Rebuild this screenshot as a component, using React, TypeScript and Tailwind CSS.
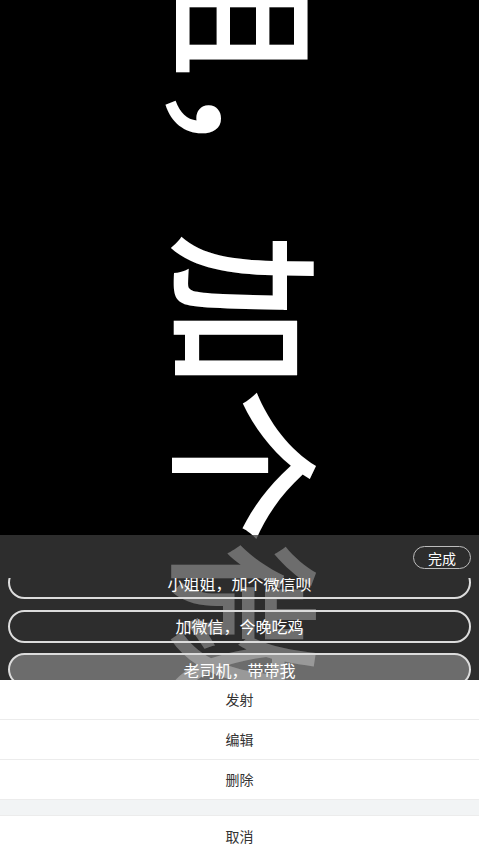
import React from "react";

const phrases = [
  { text: "小姐姐，加个微信呗", active: false },
  { text: "加微信，今晚吃鸡", active: false },
  { text: "老司机，带带我", active: true },
];

const actions = ["发射", "编辑", "删除"];

const cjk = "font-['Noto_Sans_CJK_SC','Noto_Sans',sans-serif]";

export default function App() {
  return (
    <div className={`relative h-[853px] w-full overflow-hidden bg-black ${cjk}`}>
      {/* ── Scrolling big text ── */}
      <div className="absolute left-[330px] top-[-387px] origin-top-left rotate-90 whitespace-nowrap text-[155px] leading-[155px] font-medium text-white">
        小姐姐，加个微信呗
      </div>

      <div className="flex h-full flex-col">
        <div className="h-[535px] shrink-0" />

        {/* ── Phrase panel ── */}
        <div className="relative h-[145px] shrink-0 bg-[rgba(60,60,60,0.75)]">
          <div className="flex justify-end pr-[8px] pt-[11px]">
            <button className="flex h-[23px] w-[58px] items-center justify-center rounded-full border border-[#bdbdbd] text-[14px] leading-none text-white">
              完成
            </button>
          </div>
          <div className="mt-[9px] h-[102px] overflow-hidden">
            <div className="-mt-[12px] flex flex-col gap-[10.5px] px-[8px]">
              {phrases.map((p) => (
                <div
                  key={p.text}
                  className={`flex h-[33px] items-center justify-center rounded-full border-2 border-[#dcdcdc] text-[16px] text-white ${
                    p.active ? "bg-[rgba(255,255,255,0.3)]" : ""
                  }`}
                >
                  {p.text}
                </div>
              ))}
            </div>
          </div>
        </div>

        {/* ── Action sheet ── */}
        <div className="relative shrink-0 bg-white text-[14px] text-[#333]">
          {actions.map((a) => (
            <div
              key={a}
              className="flex h-[40px] items-center justify-center border-b border-[#ececec]"
            >
              {a}
            </div>
          ))}
          <div className="h-[16px] border-b border-[#ececec] bg-[#f2f4f5]" />
          <div className="flex h-[40px] items-center justify-center">取消</div>
        </div>
      </div>
    </div>
  );
}
